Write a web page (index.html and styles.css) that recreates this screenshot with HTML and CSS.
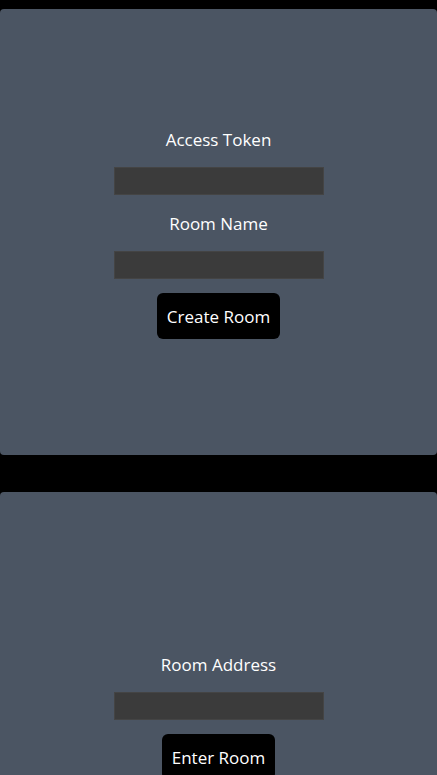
FILE: index.html
```html
<!DOCTYPE html>
<html lang="en">
<head>
<meta charset="utf-8">
<title>Rooms</title>
<link rel="stylesheet" href="styles.css">
</head>
<body>
<main class="page">
  <section class="panel">
    <form class="form">
      <label class="label" for="token">Access Token</label>
      <input class="field" id="token" type="text">
      <label class="label" for="room">Room Name</label>
      <input class="field" id="room" type="text">
      <button class="btn" type="button">Create Room</button>
    </form>
  </section>
  <section class="panel">
    <form class="form">
      <label class="label" for="addr">Room Address</label>
      <input class="field" id="addr" type="text">
      <button class="btn" type="button">Enter Room</button>
    </form>
  </section>
</main>
</body>
</html>
```
FILE: styles.css
```css
* { box-sizing: border-box; }
html, body { margin: 0; padding: 0; }
body {
  background: #000;
  font-family: "Open Sans", "Noto Sans", sans-serif;
  color: #fff;
  overflow: hidden;
}
.page {
  display: flex;
  flex-direction: column;
  gap: 37px;
  padding-top: 9px;
}
.panel {
  height: 446px;
  flex: none;
  background: #4b5563;
  border-radius: 4px;
  display: flex;
  align-items: center;
  justify-content: center;
}
.form {
  display: flex;
  flex-direction: column;
  align-items: center;
}
.label {
  font-size: 17px;
  line-height: 28px;
  padding-top: 1px;
  margin-bottom: 13px;
}
.field {
  width: 210px;
  height: 28px;
  background: #3b3b3b;
  border: 1px solid #444;
  margin: 0 0 14px;
  padding: 0 6px;
  color: #fff;
  font: inherit;
}
.btn {
  height: 46px;
  padding: 0 10px;
  background: #000;
  color: #fff;
  border: none;
  border-radius: 6px;
  font-family: inherit;
  font-size: 17px;
}
```
